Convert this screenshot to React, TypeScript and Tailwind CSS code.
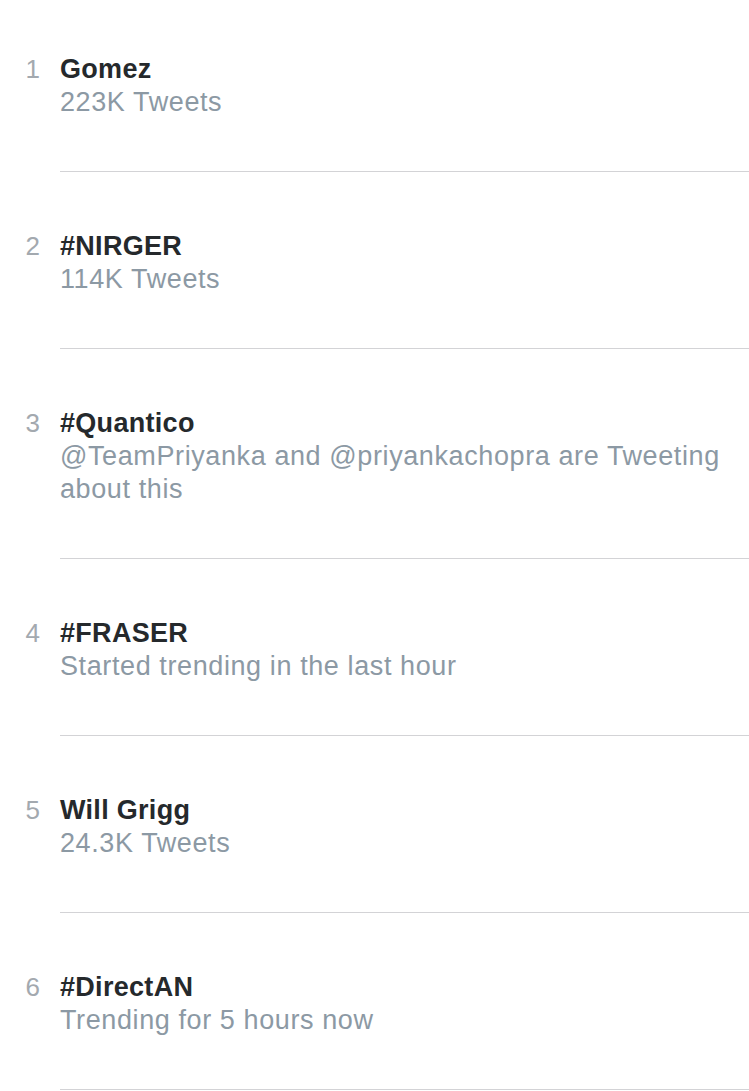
const trends = [
  { rank: 1, name: 'Gomez', meta: '223K Tweets' },
  { rank: 2, name: '#NIRGER', meta: '114K Tweets' },
  { rank: 3, name: '#Quantico', meta: '@TeamPriyanka and @priyankachopra are Tweeting about this' },
  { rank: 4, name: '#FRASER', meta: 'Started trending in the last hour' },
  { rank: 5, name: 'Will Grigg', meta: '24.3K Tweets' },
  { rank: 6, name: '#DirectAN', meta: 'Trending for 5 hours now' },
];

export default function App() {
  return (
    <div
      className="min-h-screen w-[749px] bg-white overflow-hidden"
      style={{ fontFamily: '"Liberation Sans", Arial, sans-serif' }}
    >
      <ul className="-mt-[5px]">
        {trends.map((t) => (
          <li key={t.rank} className="flex">
            <div className="w-[40px] shrink-0 pt-[58px] text-right text-[26px] leading-[33px] text-[#a3a9af]">
              {t.rank}
            </div>
            <div className="ml-[20px] flex-1 min-w-0 pt-[58px] pb-[52px] pr-[20px] border-b border-[#d3d3d6]">
              <div className="text-[27px] leading-[33px] font-bold tracking-[0.3px] text-[#25292c]">{t.name}</div>
              <div className="text-[27px] leading-[33px] tracking-[0.6px] text-[#8c99a4]">{t.meta}</div>
            </div>
          </li>
        ))}
      </ul>
    </div>
  );
}
